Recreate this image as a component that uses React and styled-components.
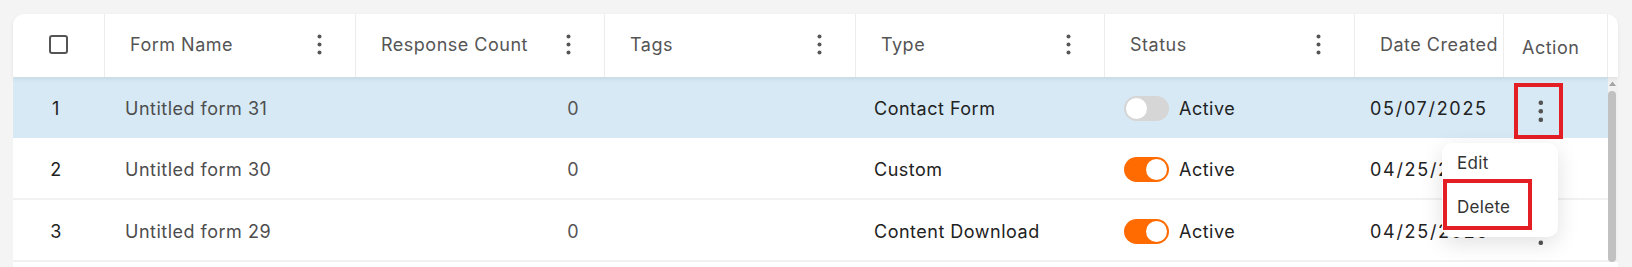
import React from "react";
import styled, { createGlobalStyle } from "styled-components";

const COLS = "92px 251px 249px 251px 249px 250px 149px 104px";

const GlobalStyle = createGlobalStyle`
  html, body { margin: 0; padding: 0; background: #f4f4f4; }
  body { font-family: Inter, "Noto Sans", Arial, sans-serif; -webkit-font-smoothing: antialiased; }
  * { box-sizing: border-box; }
`;

const Page = styled.div`
  padding: 14px 14px 0 13px;
  height: 267px;
  overflow: hidden;
`;

const Card = styled.div`
  background: #ffffff;
  border-radius: 12px 12px 0 0;
  min-height: 300px;
  display: flex;
  flex-direction: column;
`;

const HeaderBar = styled.div`
  display: flex;
  height: 63px;
  position: relative;
  z-index: 2;
  box-shadow: 0 2px 4px rgba(0, 0, 0, 0.07);
  border-radius: 12px 12px 0 0;
  background: #fff;
`;

const HeaderGrid = styled.div`
  display: grid;
  grid-template-columns: ${COLS};
`;

const HeaderSpacer = styled.div`
  flex: 1;
`;

const HeaderCell = styled.div`
  display: flex;
  align-items: center;
  justify-content: ${(p) => (p.$center ? "center" : "space-between")};
  padding: ${(p) => (p.$center ? "0" : "0 33px 2px 25px")};
  border-right: 1px solid #ececec;
  font-size: 18px;
  letter-spacing: 0.5px;
  color: #555;
  white-space: nowrap;
  overflow: hidden;
`;

const DateHeaderCell = styled(HeaderCell)`
  padding: 0 0 2px 25px;
  justify-content: flex-start;
`;

const ActionHeaderCell = styled(HeaderCell)`
  padding: 4px 0 0 18px;
  justify-content: flex-start;
`;

const Checkbox = styled.span`
  width: 19px;
  height: 19px;
  border: 2px solid #555;
  border-radius: 3px;
  margin-bottom: 2px;
`;

const Body = styled.div`
  display: flex;
`;

const Rows = styled.div`
  display: flex;
  flex-direction: column;
`;

const Row = styled.div`
  display: grid;
  grid-template-columns: ${COLS};
  height: ${(p) => (p.$first ? "61px" : "62px")};
  background: ${(p) => (p.$selected ? "#d6e9f5" : "#fff")};
  border-bottom: ${(p) => (p.$first ? "0" : "2px solid #f1f1f1")};
  font-size: 18px;
  letter-spacing: 0.5px;
`;

const Cell = styled.div`
  display: flex;
  align-items: center;
  position: relative;
  white-space: nowrap;
  color: ${(p) => p.$color || "#222"};
  justify-content: ${(p) => p.$justify || "flex-start"};
  padding: ${(p) => p.$pad || "0"};
  letter-spacing: ${(p) => p.$spacing || "inherit"};
`;

const Toggle = styled.span`
  width: 45px;
  height: 25px;
  border-radius: 13px;
  background: ${(p) => (p.$on ? "#ff6b00" : "#d6d6d6")};
  display: flex;
  align-items: center;
  justify-content: ${(p) => (p.$on ? "flex-end" : "flex-start")};
  padding: 0 2px;
  margin-right: 10px;
`;

const Knob = styled.span`
  width: 21px;
  height: 21px;
  border-radius: 50%;
  background: #fff;
`;

const KebabButton = styled.div`
  width: 49px;
  height: 56px;
  margin-top: 6px;
  border: 4px solid ${(p) => (p.$marked ? "#e41e25" : "transparent")};
  display: flex;
  align-items: center;
  justify-content: center;
  padding-left: 4px;
`;

const Menu = styled.div`
  position: absolute;
  left: -62px;
  top: 66px;
  width: 116px;
  background: #fff;
  border-radius: 10px;
  box-shadow: 0 6px 22px rgba(0, 0, 0, 0.12);
  padding: 0 0 7px 0;
  z-index: 10;
  display: flex;
  flex-direction: column;
  letter-spacing: 0.3px;
`;

const MenuItem = styled.div`
  height: ${(p) => (p.$marked ? "51px" : "36px")};
  display: flex;
  align-items: center;
  font-size: 17px;
  color: #333;
  padding-top: 4px;
  padding-left: ${(p) => (p.$marked ? "10px" : "15px")};
  margin-left: ${(p) => (p.$marked ? "1px" : "0")};
  width: ${(p) => (p.$marked ? "89px" : "auto")};
  border: ${(p) => (p.$marked ? "4px solid #e41e25" : "0")};
`;

const ScrollTrack = styled.div`
  width: 10px;
  background: #f1f1f1;
  display: flex;
  flex-direction: column;
  align-items: flex-start;
  padding-top: 4px;
`;

const ScrollThumb = styled.div`
  margin-top: 4px;
  width: 8px;
  flex: 1;
  background: #c1c1c1;
  border-radius: 4px;
`;

function Dots({ gap = 8, r = 2, color = "#555" }) {
  const h = gap * 2 + r * 2;
  return (
    <svg width={r * 2 + 1} height={h + 1} viewBox={`0 0 ${r * 2 + 1} ${h + 1}`}>
      <circle cx={r + 0.5} cy={r + 0.5} r={r} fill={color} />
      <circle cx={r + 0.5} cy={r + 0.5 + gap} r={r} fill={color} />
      <circle cx={r + 0.5} cy={r + 0.5 + gap * 2} r={r} fill={color} />
    </svg>
  );
}

const rows = [
  { id: 1, name: "Untitled form 31", count: 0, type: "Contact Form", on: false, date: "05/07/2025" },
  { id: 2, name: "Untitled form 30", count: 0, type: "Custom", on: true, date: "04/25/2025" },
  { id: 3, name: "Untitled form 29", count: 0, type: "Content Download", on: true, date: "04/25/2025" },
];

export default function App() {
  return (
    <>
      <GlobalStyle />
      <Page>
        <Card>
          <HeaderBar>
            <HeaderGrid>
              <HeaderCell $center>
                <Checkbox />
              </HeaderCell>
              <HeaderCell>
                Form Name <Dots />
              </HeaderCell>
              <HeaderCell>
                Response Count <Dots />
              </HeaderCell>
              <HeaderCell>
                Tags <Dots />
              </HeaderCell>
              <HeaderCell>
                Type <Dots />
              </HeaderCell>
              <HeaderCell>
                Status <Dots />
              </HeaderCell>
              <DateHeaderCell>Date Created</DateHeaderCell>
              <ActionHeaderCell>Action</ActionHeaderCell>
            </HeaderGrid>
            <HeaderSpacer />
          </HeaderBar>
          <Body>
            <Rows>
              {rows.map((r, i) => (
                <Row key={r.id} $selected={i === 0} $first={i === 0}>
                  <Cell $justify="center" $pad="0 6px 0 0">{r.id}</Cell>
                  <Cell $color="#4d4d4d" $pad="0 0 0 20px">{r.name}</Cell>
                  <Cell $color="#555" $justify="flex-end" $pad="0 26px 0 0">{r.count}</Cell>
                  <Cell />
                  <Cell $pad="0 0 0 18px">{r.type}</Cell>
                  <Cell $pad="0 0 0 19px">
                    <Toggle $on={r.on}>
                      <Knob />
                    </Toggle>
                    Active
                  </Cell>
                  <Cell $pad="0 0 0 15px" $spacing="1.7px">{r.date}</Cell>
                  <Cell $pad="0 0 0 10px">
                    <KebabButton $marked={i === 0}>
                      <Dots gap={8.5} r={2.3} />
                    </KebabButton>
                    {i === 0 && (
                      <Menu>
                        <MenuItem>Edit</MenuItem>
                        <MenuItem $marked>Delete</MenuItem>
                      </Menu>
                    )}
                  </Cell>
                </Row>
              ))}
            </Rows>
            <ScrollTrack>
              <svg width="9" height="6" viewBox="0 0 9 6">
                <polygon points="4.5,0.5 8,5 1,5" fill="#a3a3a3" />
              </svg>
              <ScrollThumb />
            </ScrollTrack>
          </Body>
        </Card>
      </Page>
    </>
  );
}
